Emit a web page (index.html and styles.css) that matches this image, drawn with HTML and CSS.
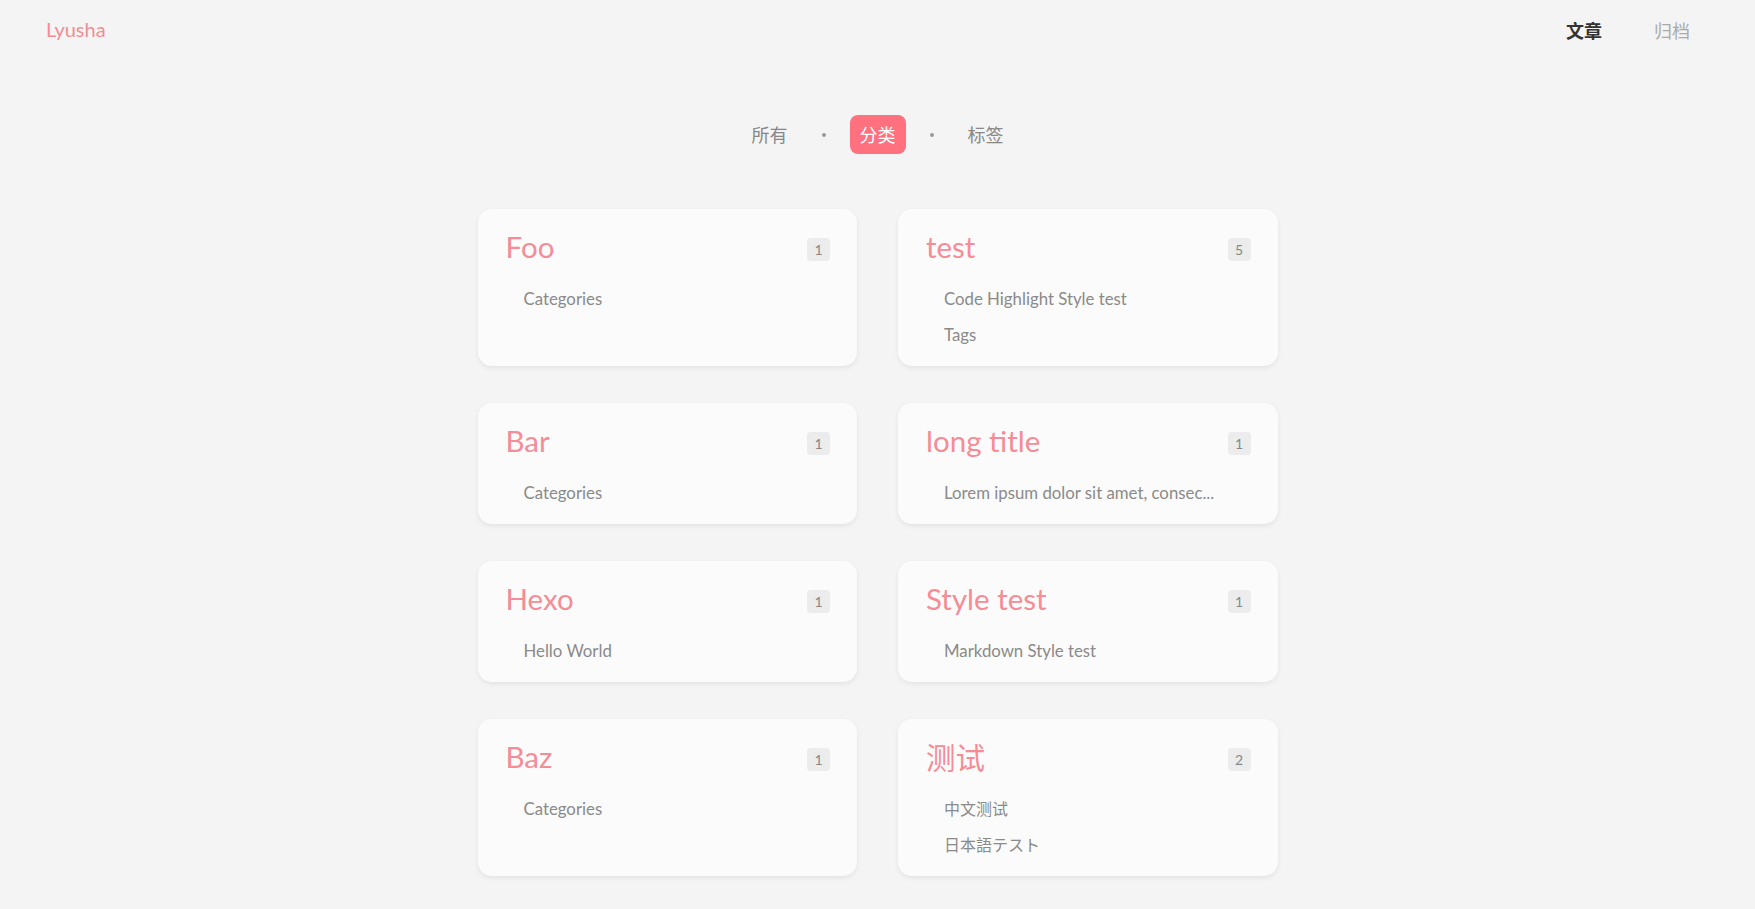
FILE: index.html
```html
<!DOCTYPE html>
<html lang="zh">
<head>
<meta charset="utf-8">
<title>Lyusha - 分类</title>
<link rel="stylesheet" href="styles.css">
</head>
<body>
<header class="header">
  <a class="logo" href="#">Lyusha</a>
  <nav class="nav">
    <a class="nav-link active" href="#">文章</a>
    <a class="nav-link" href="#">归档</a>
  </nav>
</header>
<main class="main">
  <div class="tabs">
    <a class="tab" href="#">所有</a>
    <span class="dot"></span>
    <a class="tab current" href="#">分类</a>
    <span class="dot"></span>
    <a class="tab" href="#">标签</a>
  </div>
  <div class="grid">
    <section class="card">
      <div class="card-head"><span class="card-title">Foo</span><span class="count">1</span></div>
      <ul class="posts"><li>Categories</li></ul>
    </section>
    <section class="card">
      <div class="card-head"><span class="card-title">test</span><span class="count">5</span></div>
      <ul class="posts"><li>Code Highlight Style test</li><li>Tags</li></ul>
    </section>
    <section class="card">
      <div class="card-head"><span class="card-title">Bar</span><span class="count">1</span></div>
      <ul class="posts"><li>Categories</li></ul>
    </section>
    <section class="card">
      <div class="card-head"><span class="card-title">long title</span><span class="count">1</span></div>
      <ul class="posts"><li>Lorem ipsum dolor sit amet, consec...</li></ul>
    </section>
    <section class="card">
      <div class="card-head"><span class="card-title">Hexo</span><span class="count">1</span></div>
      <ul class="posts"><li>Hello World</li></ul>
    </section>
    <section class="card">
      <div class="card-head"><span class="card-title">Style test</span><span class="count">1</span></div>
      <ul class="posts"><li>Markdown Style test</li></ul>
    </section>
    <section class="card">
      <div class="card-head"><span class="card-title">Baz</span><span class="count">1</span></div>
      <ul class="posts"><li>Categories</li></ul>
    </section>
    <section class="card">
      <div class="card-head"><span class="card-title">测试</span><span class="count">2</span></div>
      <ul class="posts"><li class="cjk">中文测试</li><li class="cjk">日本語テスト</li></ul>
    </section>
  </div>
</main>
</body>
</html>
```

FILE: styles.css
```css
* { box-sizing: border-box; }
html, body { margin: 0; padding: 0; }
body {
  background: #f4f4f4;
  font-family: "Lato", "Noto Sans CJK SC", sans-serif;
  color: #888;
}
a { text-decoration: none; color: inherit; }

.header {
  height: 60px;
  display: flex;
  align-items: center;
  justify-content: space-between;
  padding: 0 39px 0 46px;
}
.logo {
  font-size: 20px;
  color: #f58c96;
  margin-top: -2px;
}
.nav { display: flex; }
.nav-link {
  padding: 0 26px;
  font-size: 18px;
  color: #aaa;
  font-family: "Noto Sans CJK SC", sans-serif;
}
.nav-link.active { color: #333; font-weight: 700; }

.main { padding-bottom: 35px; }

.tabs {
  margin: 55px auto 55px;
  display: flex;
  justify-content: center;
  align-items: center;
  height: 39px;
  font-family: "Noto Sans CJK SC", sans-serif;
}
.tab {
  padding: 0 10px;
  height: 39px;
  line-height: 39px;
  font-size: 18px;
  color: #888;
  border-radius: 8px;
}
.tab.current {
  background: #ff717f;
  color: #fff;
}
.dot {
  width: 4px;
  height: 4px;
  border-radius: 50%;
  background: #999;
  margin: 0 24px;
}

.grid {
  width: 800px;
  margin: 0 auto;
  display: grid;
  grid-template-columns: 1fr 1fr;
  column-gap: 41px;
  row-gap: 37px;
}
.card {
  background: #fbfbfb;
  border-radius: 14px;
  box-shadow: 0 2px 5px rgba(0, 0, 0, 0.07);
  padding: 20px 27px 13px 28px;
}
.card-head {
  display: flex;
  justify-content: space-between;
  align-items: center;
  height: 40px;
}
.card-title {
  font-size: 29.5px;
  color: #f58c96;
  font-family: "Lato", "Noto Sans CJK SC", sans-serif;
  margin-top: -6px;
}
.count {
  width: 23px;
  height: 23px;
  line-height: 23px;
  text-align: center;
  border-radius: 4px;
  background: #ececec;
  color: #888;
  font-size: 14px;
}
.posts {
  list-style: none;
  margin: 12px 0 0;
  padding: 0 0 0 18px;
}
.posts li {
  height: 36px;
  line-height: 36px;
  font-size: 16.8px;
  color: #8a8a8a;
  white-space: nowrap;
}
.posts li.cjk { font-size: 16px; }
```
